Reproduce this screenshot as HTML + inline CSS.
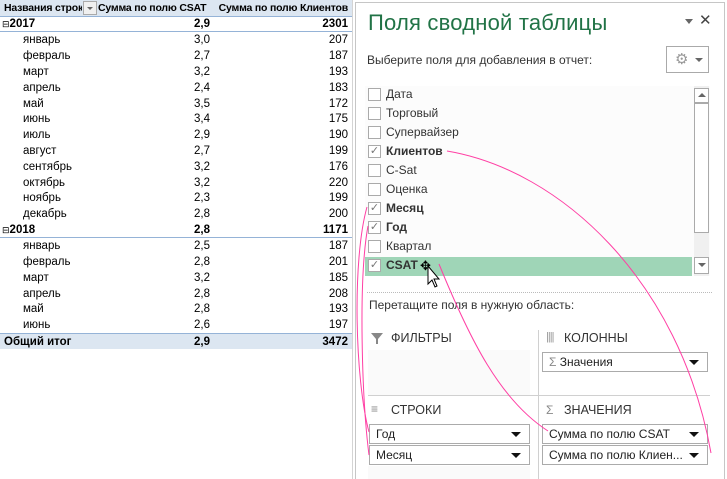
<!DOCTYPE html>
<html><head><meta charset="utf-8"><style>
*{margin:0;padding:0;box-sizing:border-box}
body{width:727px;height:479px;overflow:hidden;background:#fff;font-family:"Liberation Sans","DejaVu Sans",sans-serif;position:relative}
.t{position:absolute;left:0;top:0;width:352px;font-size:11.5px;color:#000}
.r{position:absolute;left:0;width:352px;height:16px;line-height:16px}
.r span{position:absolute;top:0}
.c1{left:4px}.c1i{left:23px}
.c2{right:142px;text-align:right}
.c3{right:4px;text-align:right}
.b{font-weight:bold}
.a{position:absolute}
.p{font-family:"Liberation Sans","DejaVu Sans",sans-serif;color:#333;font-size:12px}
.cb{position:absolute;left:368px;width:13px;height:13px;border:1px solid #aaa;background:#fff}
.fl{position:absolute;left:386px;font-size:12px;color:#333;line-height:14px}
.dd{position:absolute;height:20px;border:1px solid #ababab;background:#fff;font-size:12px;color:#222;line-height:18px;padding-left:6px}
.dd:after{content:"";position:absolute;right:8px;top:7px;border-left:5px solid transparent;border-right:5px solid transparent;border-top:5px solid #111}
.h{font-size:10.5px;letter-spacing:-0.2px}
</style></head><body>
<div class="t">
<div class="r" style="top:0;background:#dce6f1;border-bottom:1px solid #95b3d7;height:17px"><span class="c1 b h" style="width:78px;overflow:hidden;white-space:nowrap">Названия строк</span><span class="a" style="left:83px;top:1px;width:14px;height:14px;border:1px solid #aaa;background:#f0f0f0"><span class="a" style="left:3px;top:5px;border-left:3px solid transparent;border-right:3px solid transparent;border-top:3px solid #666"></span></span><span class="b h" style="left:98px">Сумма по полю CSAT</span><span class="c3 b h">Сумма по полю Клиентов</span></div>
<div class="r b" style="top:16px;border-bottom:1px solid #95b3d7"><span class="c1" style="left:2px"><span style="position:static;font-size:9px;font-weight:normal">⊟</span>2017</span><span class="c2">2,9</span><span class="c3">2301</span></div>
<div class="r" style="top:32px"><span class="c1i">январь</span><span class="c2">3,0</span><span class="c3">207</span></div>
<div class="r" style="top:48px"><span class="c1i">февраль</span><span class="c2">2,7</span><span class="c3">187</span></div>
<div class="r" style="top:64px"><span class="c1i">март</span><span class="c2">3,2</span><span class="c3">193</span></div>
<div class="r" style="top:80px"><span class="c1i">апрель</span><span class="c2">2,4</span><span class="c3">183</span></div>
<div class="r" style="top:96px"><span class="c1i">май</span><span class="c2">3,5</span><span class="c3">172</span></div>
<div class="r" style="top:111px"><span class="c1i">июнь</span><span class="c2">3,4</span><span class="c3">175</span></div>
<div class="r" style="top:127px"><span class="c1i">июль</span><span class="c2">2,9</span><span class="c3">190</span></div>
<div class="r" style="top:143px"><span class="c1i">август</span><span class="c2">2,7</span><span class="c3">199</span></div>
<div class="r" style="top:159px"><span class="c1i">сентябрь</span><span class="c2">3,2</span><span class="c3">176</span></div>
<div class="r" style="top:175px"><span class="c1i">октябрь</span><span class="c2">3,2</span><span class="c3">220</span></div>
<div class="r" style="top:190px"><span class="c1i">ноябрь</span><span class="c2">2,3</span><span class="c3">199</span></div>
<div class="r" style="top:206px"><span class="c1i">декабрь</span><span class="c2">2,8</span><span class="c3">200</span></div>
<div class="r b" style="top:222px;border-bottom:1px solid #95b3d7"><span class="c1" style="left:2px"><span style="position:static;font-size:9px;font-weight:normal">⊟</span>2018</span><span class="c2">2,8</span><span class="c3">1171</span></div>
<div class="r" style="top:238px"><span class="c1i">январь</span><span class="c2">2,5</span><span class="c3">187</span></div>
<div class="r" style="top:254px"><span class="c1i">февраль</span><span class="c2">2,8</span><span class="c3">201</span></div>
<div class="r" style="top:270px"><span class="c1i">март</span><span class="c2">3,2</span><span class="c3">185</span></div>
<div class="r" style="top:286px"><span class="c1i">апрель</span><span class="c2">2,8</span><span class="c3">208</span></div>
<div class="r" style="top:301px"><span class="c1i">май</span><span class="c2">2,8</span><span class="c3">193</span></div>
<div class="r" style="top:317px"><span class="c1i">июнь</span><span class="c2">2,6</span><span class="c3">197</span></div>
<div class="r b" style="top:333px;background:#dce6f1;border-top:1px solid #95b3d7"><span class="c1">Общий итог</span><span class="c2">2,9</span><span class="c3">3472</span></div>
</div>
<!-- panel -->
<div class="a" style="left:352px;top:0;width:1px;height:479px;background:#d4d4d4"></div>
<div class="a" style="left:355px;top:2px;width:370px;height:477px;border:1px solid #c6c6c6;border-bottom:none;background:#fff"></div>
<div class="a" style="left:368px;top:10px;font-size:22px;color:#217346;letter-spacing:0.2px">Поля сводной таблицы</div>
<div class="a" style="left:685px;top:19px;border-left:4px solid transparent;border-right:4px solid transparent;border-top:5px solid #666"></div>
<div class="a" style="left:699px;top:11px;font-size:15px;color:#444;font-weight:bold">✕</div>
<div class="a p" style="left:367px;top:53px">Выберите поля для добавления в отчет:</div>
<div class="a" style="left:666px;top:46px;width:43px;height:27px;border:1px solid #aaa"><span class="a" style="left:8px;top:3px;font-size:15px;color:#999">⚙</span><span class="a" style="left:28px;top:11px;border-left:4px solid transparent;border-right:4px solid transparent;border-top:4px solid #666"></span></div>
<div class="a" style="left:365px;top:86px;width:345px;height:190px;background:#fcfcfc"></div>
<div class="a" style="left:694px;top:86px;width:15px;height:190px;background:#f0f0f0"></div>
<div class="a" style="left:694px;top:88px;width:15px;height:15px;border:1px solid #aaa;background:#fff"><span class="a" style="left:3px;top:4px;border-left:4px solid transparent;border-right:4px solid transparent;border-bottom:4px solid #666"></span></div>
<div class="a" style="left:694px;top:103px;width:15px;height:130px;border:1px solid #aaa;background:#fff"></div>
<div class="a" style="left:694px;top:257px;width:15px;height:17px;border:1px solid #aaa;background:#fff"><span class="a" style="left:3px;top:5px;border-left:4px solid transparent;border-right:4px solid transparent;border-top:4px solid #666"></span></div>
<div class="a" style="left:365px;top:257px;width:327px;height:19px;background:#9fd5b7"></div>
<div class="cb" style="top:88px"></div><div class="fl" style="top:87px">Дата</div>
<div class="cb" style="top:107px"></div><div class="fl" style="top:106px">Торговый</div>
<div class="cb" style="top:126px"></div><div class="fl" style="top:125px">Супервайзер</div>
<div class="cb" style="top:145px;font-size:11px;color:#777;line-height:11px;text-align:center">✓</div><div class="fl b" style="top:144px">Клиентов</div>
<div class="cb" style="top:164px"></div><div class="fl" style="top:163px">C-Sat</div>
<div class="cb" style="top:183px"></div><div class="fl" style="top:182px">Оценка</div>
<div class="cb" style="top:202px;font-size:11px;color:#777;line-height:11px;text-align:center">✓</div><div class="fl b" style="top:201px">Месяц</div>
<div class="cb" style="top:221px;font-size:11px;color:#777;line-height:11px;text-align:center">✓</div><div class="fl b" style="top:220px">Год</div>
<div class="cb" style="top:240px"></div><div class="fl" style="top:239px">Квартал</div>
<div class="cb" style="top:259px;font-size:11px;color:#777;line-height:11px;text-align:center">✓</div><div class="fl b" style="top:258px">CSAT</div>
<div class="a" style="left:367px;top:292px;width:345px;border-top:1px dotted #bbb"></div>
<div class="a p" style="left:369px;top:298px">Перетащите поля в нужную область:</div>
<div class="a" style="left:368px;top:350px;width:162px;height:45px;background:#fafafa"></div>
<div class="a" style="left:368px;top:466px;width:162px;height:13px;background:#fafafa"></div>
<div class="a" style="left:538px;top:330px;width:1px;height:149px;background:#d0d0d0"></div>
<div class="a" style="left:368px;top:395px;width:342px;height:1px;background:#d0d0d0"></div>
<svg class="a" style="left:371px;top:333px" width="12" height="12"><path d="M0 0 H12 L7 6 V11 H5 V6 Z" fill="#888"/></svg>
<div class="a p" style="left:391px;top:331px;font-size:12.5px">ФИЛЬТРЫ</div>
<div class="a p" style="left:546px;top:331px;color:#999;font-size:11px;letter-spacing:-1px">||||</div>
<div class="a p" style="left:564px;top:331px;font-size:12.5px">КОЛОННЫ</div>
<div class="a p" style="left:371px;top:402px;color:#888;font-size:12px">≡</div>
<div class="a p" style="left:391px;top:403px;font-size:12.5px">СТРОКИ</div>
<div class="a p" style="left:546px;top:403px;color:#888">Σ</div>
<div class="a p" style="left:564px;top:403px;font-size:12.5px">ЗНАЧЕНИЯ</div>
<div class="dd" style="left:542px;top:352px;width:166px"><span style="color:#888">Σ</span> Значения</div>
<div class="dd" style="left:369px;top:424px;width:161px">Год</div>
<div class="dd" style="left:369px;top:445px;width:161px">Месяц</div>
<div class="dd" style="left:542px;top:424px;width:166px">Сумма по полю CSAT</div>
<div class="dd" style="left:542px;top:445px;width:166px">Сумма по полю Клиен...</div>
<svg class="a" style="left:0;top:0" width="727" height="479">
<g fill="none" stroke="#ff3fa4" stroke-width="1">
<path d="M447 151 C560 170 680 280 711 453"/>
<path d="M439 264 C470 340 500 400 548 431"/>
<path d="M367 207 C352 260 355 380 369 432"/>
<path d="M368 226 C358 280 362 400 369 455"/>
</g>
<text x="420" y="270" font-size="13" fill="#000">✥</text>
<path d="M428 266 l0 18 l4 -4 l3 7 l2 -1 l-3 -7 l5 0 z" fill="#fff" stroke="#000" stroke-width="1"/>
</svg>
</body></html>
